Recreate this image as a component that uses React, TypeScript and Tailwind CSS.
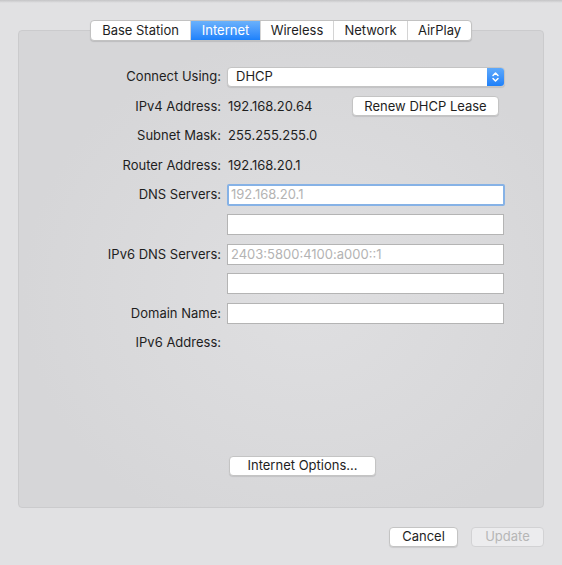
import React from 'react';

const tabs = ['Base Station', 'Internet', 'Wireless', 'Network', 'AirPlay'];

function Row({ label, children }: { label: string; children?: React.ReactNode }) {
  return (
    <div className="flex items-center h-[29.6px]">
      <div className="w-[203px] text-right pr-[1px] shrink-0">{label}</div>
      <div className="ml-[5px] flex items-center flex-1">{children}</div>
    </div>
  );
}

function Field({ placeholder, focused }: { placeholder?: string; focused?: boolean }) {
  return (
    <div
      className={
        focused
          ? 'w-[278px] h-[22px] bg-white border-[2px] border-[#86b2e6] rounded-[2px] flex items-center pl-[2px] text-[#b3b3b3]'
          : 'w-[277px] h-[21px] bg-white border border-[#b4b4b4] flex items-center pl-[3px] text-[#b3b3b3]'
      }
    >
      {placeholder}
    </div>
  );
}

export default function App() {
  return (
    <div
      className="w-[562px] h-[565px] bg-[#e1e1e3] text-[13px] text-[#1e1e1e] relative pt-[20px] px-[18px]"
      style={{ fontFamily: 'Inter, "Liberation Sans", sans-serif' }}
    >
      {/* window top shadow */}
      <div className="absolute top-0 left-0 right-0 h-[3px] bg-gradient-to-b from-[#c4c4c6] to-transparent" />

      <div className="relative z-10 flex justify-center">
        <div className="flex h-[21px] bg-white border border-[#c2c2c2] rounded-[4px] shadow-[0_1px_1px_rgba(0,0,0,0.12)] overflow-hidden">
          {tabs.map((t, i) => (
            <div
              key={t}
              className={
                (t === 'Internet'
                  ? 'bg-gradient-to-b from-[#6ab1fb] to-[#1b81fb] text-white '
                  : 'text-[#1e1e1e] ') +
                (i > 0 ? 'border-l border-[#d4d4d4] ' : '') +
                'flex items-center justify-center ' +
                ['w-[99px]', 'w-[70px]', 'w-[73px]', 'w-[74px]', 'w-[64px]'][i]
              }
            >
              {t}
            </div>
          ))}
        </div>
      </div>

      <div className="-mt-[11px] h-[478px] rounded-[4px] border border-[#cbcbcd] bg-[radial-gradient(ellipse_at_55%_55%,#dfdfe1,#d6d6d8_70%)] pt-[31px]">
        <Row label="Connect Using:">
          <div className="w-[278px] h-[20px] bg-white border border-[#c4c4c4] rounded-[4px] shadow-[0_1px_1px_rgba(0,0,0,0.1)] flex items-center overflow-hidden">
            <span className="flex-1 pl-[8px]">DHCP</span>
            <div className="w-[17px] h-full bg-gradient-to-b from-[#5ea9fb] to-[#1d80f9] flex items-center justify-center">
              <svg width="9" height="12" viewBox="0 0 9 12" fill="none" stroke="white" strokeWidth="1.5" strokeLinecap="round" strokeLinejoin="round">
                <path d="M2 4.5 L4.5 2 L7 4.5" />
                <path d="M2 7.5 L4.5 10 L7 7.5" />
              </svg>
            </div>
          </div>
        </Row>
        <Row label="IPv4 Address:">
          <span className="w-[125px] pl-[1px]">192.168.20.64</span>
          <div className="w-[147px] h-[20px] bg-white border border-[#c4c4c4] rounded-[4px] shadow-[0_1px_1px_rgba(0,0,0,0.1)] flex items-center justify-center">
            Renew DHCP Lease
          </div>
        </Row>
        <Row label="Subnet Mask:">
          <span className="pl-[1px]">255.255.255.0</span>
        </Row>
        <Row label="Router Address:">
          <span className="pl-[1px]">192.168.20.1</span>
        </Row>
        <Row label="DNS Servers:">
          <Field placeholder="192.168.20.1" focused />
        </Row>
        <Row label="">
          <Field />
        </Row>
        <Row label="IPv6 DNS Servers:">
          <Field placeholder="2403:5800:4100:a000::1" />
        </Row>
        <Row label="">
          <Field />
        </Row>
        <Row label="Domain Name:">
          <Field />
        </Row>
        <Row label="IPv6 Address:" />

        <div className="mt-[98px] ml-[210px] w-[147px] h-[20px] bg-white border border-[#c4c4c4] rounded-[4px] shadow-[0_1px_1px_rgba(0,0,0,0.1)] flex items-center justify-center">
          Internet Options...
        </div>
      </div>

      <div className="flex justify-end gap-[13px] mt-[19px]">
        <div className="w-[69px] h-[20px] bg-white border border-[#c4c4c4] rounded-[4px] shadow-[0_1px_1px_rgba(0,0,0,0.1)] flex items-center justify-center">
          Cancel
        </div>
        <div className="w-[73px] h-[20px] bg-[#ececee] border border-[#d2d2d4] rounded-[4px] flex items-center justify-center text-[#b6b6b6]">
          Update
        </div>
      </div>
    </div>
  );
}
